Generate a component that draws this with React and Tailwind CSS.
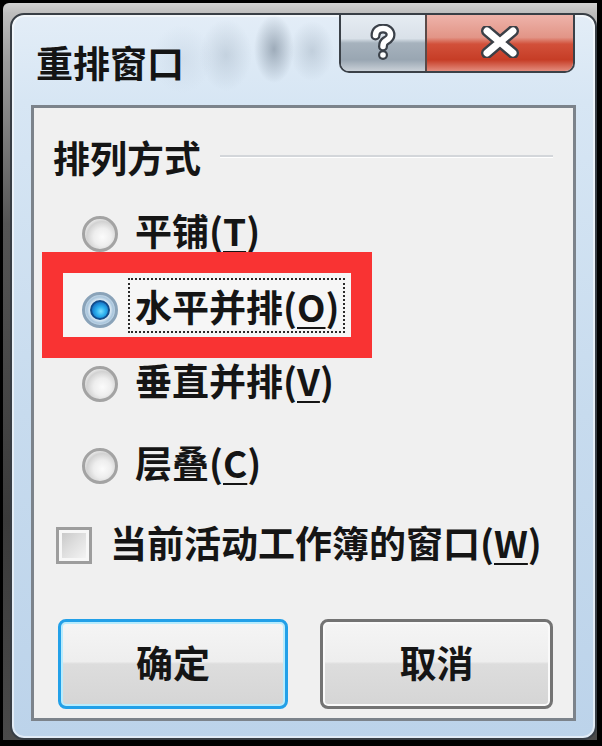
import React from "react";

const F = "font-['Noto_Sans_CJK_SC','Noto_Sans_CJK_JP',sans-serif] font-semibold";

function Radio({ checked }) {
  if (!checked) {
    return (
      <div className="w-[36px] h-[36px] shrink-0 rounded-full border-[3px] border-[#a3a3a3] bg-[radial-gradient(circle_at_58%_60%,#fbfbfb_0%,#eeeeee_35%,#d2d2d2_62%,#e4e4e4_72%,#fafafa_82%)]" />
    );
  }
  return (
    <div className="w-[36px] h-[36px] shrink-0 rounded-full border-[3px] border-[#8aa3b9] bg-[radial-gradient(circle,#e9f2f9_45%,#a9c5dc_62%,#c9dceb_74%,#eef4f9_86%)] flex items-center justify-center">
      <div className="w-[20px] h-[20px] rounded-full border-2 border-[#134d8c] bg-[radial-gradient(circle_at_55%_58%,#7fe0ff_0%,#2eb2ef_35%,#1470c4_75%,#0d4f95_100%)]" />
    </div>
  );
}

function Label({ children, k }) {
  return (
    <span className={`${F} text-[37px] leading-[36px] text-[#151515] whitespace-nowrap`}>
      {children}(<span className="underline decoration-2 underline-offset-[5px]">{k}</span>)
    </span>
  );
}

function Row({ children, k, mt }) {
  return (
    <div className={`flex items-center h-[36px] pl-[48px] gap-[17px] ${mt}`}>
      <Radio />
      <div className="mt-[-4px]">
        <Label k={k}>{children}</Label>
      </div>
    </div>
  );
}

function HelpGlyph() {
  return (
    <svg width="28" height="40" viewBox="0 0 28 40">
      <g fill="none" strokeLinecap="round" strokeLinejoin="round">
        <path d="M6.5 11.5 C6.5 6.5 10 4.5 14 4.5 C18.5 4.5 21.5 7 21.5 11 C21.5 14.5 18.5 15.8 16.5 17 C15 18 14 19.3 14 22.5" stroke="#3b4149" strokeWidth="10" />
        <path d="M6.5 11.5 C6.5 6.5 10 4.5 14 4.5 C18.5 4.5 21.5 7 21.5 11 C21.5 14.5 18.5 15.8 16.5 17 C15 18 14 19.3 14 22.5" stroke="#ffffff" strokeWidth="5.5" />
        <circle cx="14" cy="31" r="5" fill="#3b4149" />
        <circle cx="14" cy="31" r="2.8" fill="#ffffff" />
      </g>
    </svg>
  );
}

function CloseGlyph() {
  return (
    <svg width="42" height="32" viewBox="0 0 42 32">
      <g strokeLinecap="round">
        <path d="M8 5 L34 27 M34 5 L8 27" stroke="#3a3f46" strokeWidth="12" />
        <path d="M8 5 L34 27 M34 5 L8 27" stroke="#ffffff" strokeWidth="7" />
      </g>
    </svg>
  );
}

export default function App() {
  return (
    <div className="w-[602px] h-[746px] bg-black pt-[3px] pl-[3px] pr-[5px] pb-[6px]">
      <div className="w-full h-full bg-[linear-gradient(to_bottom,#d2d2d2_0%,#bdbdbd_1.4%,#9c9c9c_8%,#555555_30%,#3a3a3a_70%,#4a4a4a_100%)] rounded-tl-[6px] pt-[10px] pl-[7px]">
        <div className="w-full h-full rounded-[14px] border-2 border-[#383e45] bg-[linear-gradient(to_bottom,#e3edf7_0%,#d7e6f4_12%,#c7dbee_55%,#bcd3ea_100%)] shadow-[inset_0_0_0_2px_rgba(255,255,255,0.55)] flex flex-col overflow-hidden">
          {/* title bar */}
          <div className="h-[90px] shrink-0 flex justify-between items-start bg-[radial-gradient(ellipse_20px_34px_at_262px_34px,rgba(105,120,136,0.55),transparent),radial-gradient(ellipse_26px_36px_at_214px_40px,rgba(150,166,182,0.35),transparent),radial-gradient(ellipse_22px_30px_at_300px_36px,rgba(140,156,172,0.35),transparent),radial-gradient(ellipse_30px_34px_at_170px_44px,rgba(190,205,220,0.4),transparent)]">
            <div className={`${F} text-[37px] leading-[36px] text-[#141414] pl-[24px] mt-[29px] whitespace-nowrap`}>
              重排窗口
            </div>
            <div className="mr-[20px] flex h-[58px] rounded-b-[10px] border-2 border-t-0 border-[#3b4148] overflow-hidden">
              <div className="w-[86px] h-full flex items-center justify-center bg-[linear-gradient(to_bottom,#e6ecf2_0%,#d9e1e9_42%,#a6b2bd_50%,#99a6b2_80%,#c9d0d7_100%)] border-r-2 border-[#5a4a48] pt-[2px]">
                <HelpGlyph />
              </div>
              <div className="w-[146px] h-full flex items-center justify-center bg-[linear-gradient(to_bottom,#eeb3aa_0%,#e29587_40%,#d2503a_52%,#c63d26_80%,#e38c7d_100%)] pb-[3px]">
                <CloseGlyph />
              </div>
            </div>
          </div>

          {/* client panel */}
          <div className="mx-[19px] h-[616px] shrink-0 border-[3px] border-[#7c838b] bg-[#f0f0f0] flex flex-col">
            {/* group label */}
            <div className="flex items-center h-[36px] mt-[31px] pl-[19px] pr-[20px]">
              <span className={`${F} text-[37px] leading-[36px] text-[#151515] whitespace-nowrap`}>排列方式</span>
              <div className="flex-1 ml-[19px] mt-[-2px] h-[3px] border-t-2 border-[#d3d6da] border-b border-b-white" />
            </div>

            <Row k="T" mt="mt-[41px]">平铺</Row>

            {/* highlighted row */}
            <div className="ml-[8px] w-[330px] h-[106px] border-[21px] border-[#f93333] bg-[#f6f6f6] flex items-start pl-[19px]">
              <div className="mt-[19px]">
                <Radio checked />
              </div>
              <div className="ml-[10px] mt-[5px] h-[55px] border-2 border-dotted border-[#2a2a2a] pl-[5px] pr-[3px] flex items-center">
                <Label k="O">水平并排</Label>
              </div>
            </div>

            <Row k="V" mt="mt-[8px]">垂直并排</Row>
            <Row k="C" mt="mt-[46px]">层叠</Row>

            {/* checkbox */}
            <div className="flex items-center h-[36px] mt-[43px] pl-[22px] gap-[18px]">
              <div className="w-[36px] h-[37px] shrink-0 border-[3px] border-[#9d9d9d] bg-[#f7f7f7] p-[3px]">
                <div className="w-full h-full bg-[linear-gradient(135deg,#c9c9c9_0%,#dedede_45%,#f3f3f3_100%)]" />
              </div>
              <div className="mt-[-2px]">
                <Label k="W">当前活动工作簿的窗口</Label>
              </div>
            </div>

            {/* buttons */}
            <div className="flex mt-[56px] pl-[24px] gap-[32px]">
              <button className="w-[230px] h-[90px] rounded-[8px] border-[3px] border-[#22a0e8] shadow-[inset_0_0_0_2px_#b8ecfd] bg-[linear-gradient(to_bottom,#f5f5f5_0%,#eeeeee_47%,#dddddd_50%,#d5d5d5_100%)] flex items-center justify-center">
                <span className={`${F} text-[37px] leading-[36px] text-[#151515] mt-[-4px]`}>确定</span>
              </button>
              <button className="w-[233px] h-[90px] rounded-[8px] border-[3px] border-[#737373] shadow-[inset_0_0_0_2px_#fafafa] bg-[linear-gradient(to_bottom,#f5f5f5_0%,#eeeeee_47%,#dddddd_50%,#d5d5d5_100%)] flex items-center justify-center">
                <span className={`${F} text-[37px] leading-[36px] text-[#151515] mt-[-4px]`}>取消</span>
              </button>
            </div>
          </div>
        </div>
      </div>
    </div>
  );
}
